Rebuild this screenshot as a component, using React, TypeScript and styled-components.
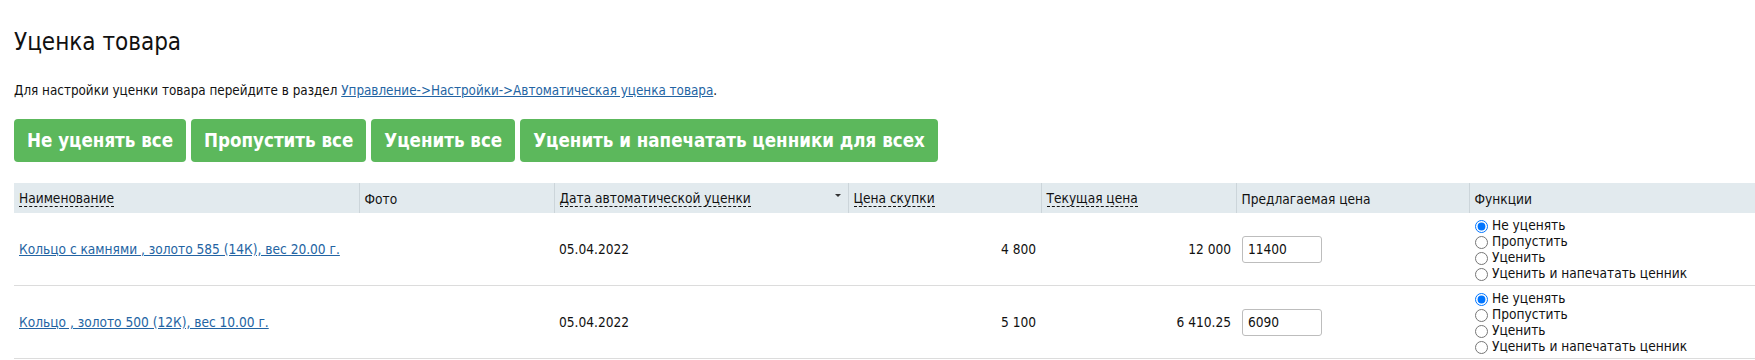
import React from "react";
import styled, { createGlobalStyle } from "styled-components";

const GlobalStyle = createGlobalStyle`
  html, body { margin: 0; padding: 0; background: #fff; }
  body {
    font-family: "DejaVu Sans Condensed", "DejaVu Sans", "Liberation Sans", sans-serif;
    color: #111;
    font-size: 13.6px;
  }
`;

const Page = styled.div`
  padding: 0 0 0 14px;
`;

const Title = styled.h1`
  margin: 0;
  padding-top: 27px;
  font-size: 24px;
  line-height: 30px;
  font-weight: normal;
  color: #111;
`;

const Note = styled.p`
  margin: 0;
  padding-top: 26px;
  font-size: 13.35px;
  line-height: 16px;
`;

const Link = styled.a`
  color: #2364a3;
  text-decoration: underline;
  cursor: pointer;
`;

const ButtonBar = styled.div`
  display: flex;
  gap: 5px;
  margin-top: 20px;
`;

const ActionButton = styled.button`
  background: #5cb85c;
  color: #fff;
  border: none;
  border-radius: 4px;
  font-family: "DejaVu Sans Condensed", "DejaVu Sans", sans-serif;
  font-weight: bold;
  font-size: 18.6px;
  line-height: 23px;
  padding: 10px 13px;
  cursor: pointer;
`;

const Table = styled.table`
  margin-top: 21px;
  width: 100%;
  border-collapse: collapse;
  table-layout: fixed;
`;

const HeadCell = styled.th<{ $first?: boolean }>`
  background: #e2eaee;
  height: 30px;
  padding: 0 5px;
  text-align: left;
  font-weight: normal;
  font-size: 13.6px;
  color: #111;
  border-left: ${(p) => (p.$first ? "none" : "1px solid #ccd5da")};
  white-space: nowrap;
`;

const HeadInner = styled.div`
  display: flex;
  align-items: center;
  padding-top: 2px;
`;

const Sortable = styled.span`
  border-bottom: 1px dashed #111;
  line-height: 15px;
`;

const Caret = styled.span`
  margin-left: auto;
  margin-right: 2px;
  margin-bottom: 8px;
  width: 0;
  height: 0;
  border-left: 3px solid transparent;
  border-right: 3px solid transparent;
  border-top: 3px solid #333;
`;

const Row = styled.tr`
  border-bottom: 1px solid #dcdcdc;
`;

const Cell = styled.td<{ $align?: "left" | "right" }>`
  padding: 4px 5px;
  height: 64px;
  vertical-align: middle;
  text-align: ${(p) => p.$align ?? "left"};
  font-size: 13.6px;
  color: #111;
  white-space: nowrap;
`;

const PriceInput = styled.input`
  box-sizing: border-box;
  width: 80px;
  height: 27px;
  border: 1px solid #bdbdbd;
  border-radius: 3px;
  padding: 0 5px;
  font-family: inherit;
  font-size: 13.6px;
  color: #111;
  margin-left: 1px;
`;

const RadioGroup = styled.div`
  display: flex;
  flex-direction: column;
`;

const RadioLabel = styled.label`
  display: flex;
  align-items: center;
  height: 16px;
  line-height: 16px;
  font-size: 13.6px;
  color: #111;
`;

const Radio = styled.input`
  margin: 2px 4px 0 1px;
  width: 13px;
  height: 13px;
`;

type Item = {
  id: number;
  name: string;
  date: string;
  buy: string;
  current: string;
  proposed: string;
};

const items: Item[] = [
  {
    id: 1,
    name: "Кольцо с камнями , золото 585 (14К), вес 20.00 г.",
    date: "05.04.2022",
    buy: "4 800",
    current: "12 000",
    proposed: "11400",
  },
  {
    id: 2,
    name: "Кольцо , золото 500 (12К), вес 10.00 г.",
    date: "05.04.2022",
    buy: "5 100",
    current: "6 410.25",
    proposed: "6090",
  },
];

const options = ["Не уценять", "Пропустить", "Уценить", "Уценить и напечатать ценник"];

export default function App() {
  return (
    <>
      <GlobalStyle />
      <Page>
        <Title>Уценка товара</Title>
        <Note>
          Для настройки уценки товара перейдите в раздел{" "}
          <Link>Управление-&gt;Настройки-&gt;Автоматическая уценка товара</Link>.
        </Note>
        <ButtonBar>
          <ActionButton>Не уценять все</ActionButton>
          <ActionButton>Пропустить все</ActionButton>
          <ActionButton>Уценить все</ActionButton>
          <ActionButton>Уценить и напечатать ценники для всех</ActionButton>
        </ButtonBar>
        <Table>
          <colgroup>
            <col style={{ width: 345 }} />
            <col style={{ width: 195 }} />
            <col style={{ width: 294 }} />
            <col style={{ width: 193 }} />
            <col style={{ width: 195 }} />
            <col style={{ width: 233 }} />
            <col />
          </colgroup>
          <thead>
            <tr>
              <HeadCell $first>
                <HeadInner>
                  <Sortable>Наименование</Sortable>
                </HeadInner>
              </HeadCell>
              <HeadCell>
                <HeadInner>Фото</HeadInner>
              </HeadCell>
              <HeadCell>
                <HeadInner>
                  <Sortable>Дата автоматической уценки</Sortable>
                  <Caret />
                </HeadInner>
              </HeadCell>
              <HeadCell>
                <HeadInner>
                  <Sortable>Цена скупки</Sortable>
                </HeadInner>
              </HeadCell>
              <HeadCell>
                <HeadInner>
                  <Sortable>Текущая цена</Sortable>
                </HeadInner>
              </HeadCell>
              <HeadCell>
                <HeadInner>Предлагаемая цена</HeadInner>
              </HeadCell>
              <HeadCell>
                <HeadInner>Функции</HeadInner>
              </HeadCell>
            </tr>
          </thead>
          <tbody>
            {items.map((it) => (
              <Row key={it.id}>
                <Cell>
                  <Link>{it.name}</Link>
                </Cell>
                <Cell />
                <Cell>{it.date}</Cell>
                <Cell $align="right">{it.buy}</Cell>
                <Cell $align="right">{it.current}</Cell>
                <Cell>
                  <PriceInput defaultValue={it.proposed} />
                </Cell>
                <Cell>
                  <RadioGroup>
                    {options.map((o, i) => (
                      <RadioLabel key={o}>
                        <Radio type="radio" name={`fn-${it.id}`} defaultChecked={i === 0} />
                        {o}
                      </RadioLabel>
                    ))}
                  </RadioGroup>
                </Cell>
              </Row>
            ))}
          </tbody>
        </Table>
      </Page>
    </>
  );
}
